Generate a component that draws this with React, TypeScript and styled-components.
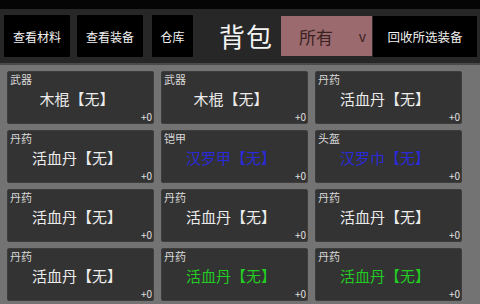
import styled, { createGlobalStyle } from 'styled-components';

const GlobalStyle = createGlobalStyle`
  html, body {
    margin: 0;
    padding: 0;
    background: #000;
    font-family: "Noto Sans CJK SC", "Noto Sans", sans-serif;
  }
`;

type Quality = 'normal' | 'blue' | 'green';

const items: { kind: string; name: string; quality: Quality }[] = [
  { kind: '武器', name: '木棍【无】', quality: 'normal' },
  { kind: '武器', name: '木棍【无】', quality: 'normal' },
  { kind: '丹药', name: '活血丹【无】', quality: 'normal' },
  { kind: '丹药', name: '活血丹【无】', quality: 'normal' },
  { kind: '铠甲', name: '汉罗甲【无】', quality: 'blue' },
  { kind: '头盔', name: '汉罗巾【无】', quality: 'blue' },
  { kind: '丹药', name: '活血丹【无】', quality: 'normal' },
  { kind: '丹药', name: '活血丹【无】', quality: 'normal' },
  { kind: '丹药', name: '活血丹【无】', quality: 'normal' },
  { kind: '丹药', name: '活血丹【无】', quality: 'normal' },
  { kind: '丹药', name: '活血丹【无】', quality: 'green' },
  { kind: '丹药', name: '活血丹【无】', quality: 'green' },
];

const qualityColor: Record<Quality, string> = {
  normal: '#ececec',
  blue: '#2a2ad8',
  green: '#22cc22',
};

const App = () => {
  return (
    <Screen>
      <GlobalStyle />
      <Header>
        <NavButton $w={66}>查看材料</NavButton>
        <NavButton $w={66} $ml={7}>查看装备</NavButton>
        <NavButton $w={41} $ml={9}>仓库</NavButton>
        <Title>背包</Title>
        <Select>
          <span>所有</span>
          <Caret>v</Caret>
        </Select>
        <RecycleButton>回收所选装备</RecycleButton>
      </Header>
      <Divider />
      <Bag>
        <Grid>
          {items.map((item, i) => (
            <Card key={i}>
              <Kind>{item.kind}</Kind>
              <Name $color={qualityColor[item.quality]}>{item.name}</Name>
              <Level>+0</Level>
            </Card>
          ))}
        </Grid>
      </Bag>
    </Screen>
  );
};

const Screen = styled.div`
  width: 480px;
  height: 304px;
  padding-top: 9px;
  box-sizing: border-box;
  background: #050505;
  overflow: hidden;
  display: flex;
  flex-direction: column;
`;

const Header = styled.div`
  height: 54px;
  background: #272727;
  display: flex;
  align-items: center;
  padding: 0 2px 0 4px;
  flex-shrink: 0;
`;

const NavButton = styled.div<{ $w: number; $ml?: number }>`
  width: ${(p) => p.$w}px;
  height: 42px;
  margin-left: ${(p) => p.$ml ?? 0}px;
  background: #000;
  color: #f2f2f2;
  font-size: 12px;
  display: flex;
  align-items: center;
  justify-content: center;
  border-radius: 1px;
  flex-shrink: 0;
`;

const Title = styled.div`
  margin-left: 26px;
  width: 56px;
  flex-shrink: 0;
  white-space: nowrap;
  font-size: 26px;
  color: #f4f4f4;
  letter-spacing: 1px;
  line-height: 1;
`;

const Select = styled.div`
  width: 91px;
  height: 40px;
  margin-left: 6px;
  background: #9a6a6e;
  color: #3a2222;
  font-size: 17px;
  display: flex;
  align-items: center;
  justify-content: space-between;
  padding: 0 6px 0 18px;
  box-sizing: border-box;
  flex-shrink: 0;
`;

const Caret = styled.span`
  font-size: 14px;
  color: #3a2222;
`;

const RecycleButton = styled.div`
  width: 104px;
  height: 41px;
  margin-left: 1px;
  background: #000;
  color: #f0f0f0;
  font-size: 12.5px;
  white-space: nowrap;
  display: flex;
  align-items: center;
  justify-content: center;
  flex-shrink: 0;
`;

const Divider = styled.div`
  height: 2px;
  background: #4a4a4a;
  flex-shrink: 0;
`;

const Bag = styled.div`
  flex: 1;
  background: #737373;
  padding: 6px 0 0 7px;
  display: flex;
  overflow: hidden;
`;

const Grid = styled.div`
  display: grid;
  grid-template-columns: repeat(3, 147px);
  grid-auto-rows: 53px;
  column-gap: 7px;
  row-gap: 6px;
`;

const Card = styled.div`
  background: #333333;
  border: 1px solid #3d3d3d;
  border-radius: 2px;
  box-sizing: border-box;
  display: flex;
  flex-direction: column;
  padding: 1px 1px 0 2px;
`;

const Kind = styled.div`
  font-size: 11px;
  line-height: 12px;
  color: #d8d8d8;
`;

const Name = styled.div<{ $color: string }>`
  font-size: 15px;
  line-height: 20px;
  margin-top: 4px;
  text-align: center;
  padding-right: 8px;
  color: ${(p) => p.$color};
`;

const Level = styled.div`
  margin-top: auto;
  align-self: flex-end;
  font-size: 10px;
  line-height: 12px;
  color: #e0e0e0;
`;

export default App;
